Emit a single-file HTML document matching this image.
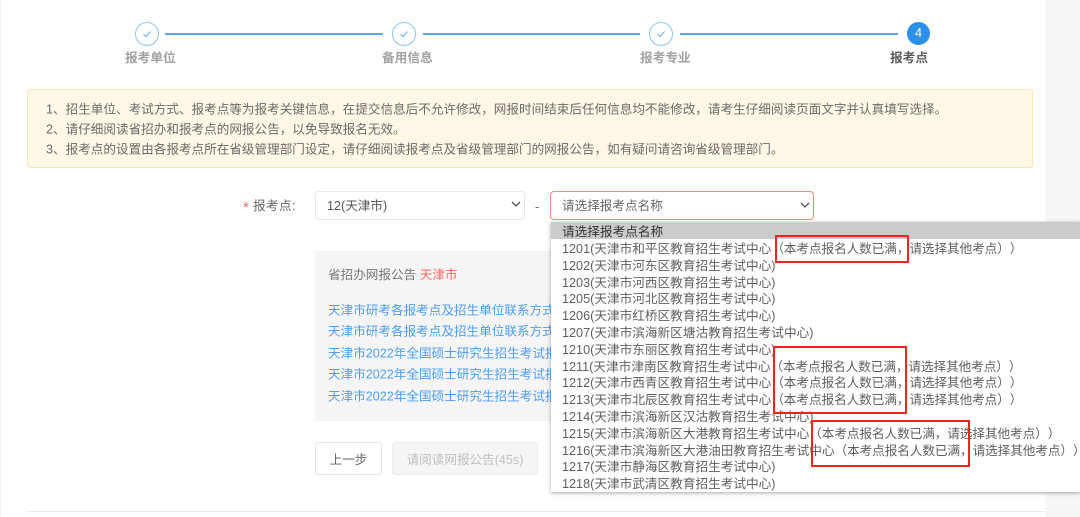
<!DOCTYPE html>
<html lang="zh"><head><meta charset="utf-8"><title>报考点</title>
<style>
html,body{margin:0;padding:0;background:#fff}
#p{position:relative;width:1080px;height:517px;overflow:hidden;background:#fff;font-family:"Liberation Sans","Noto Sans CJK SC",sans-serif;color:#606266;filter:blur(.3px)}
#p div{position:absolute;white-space:nowrap}
.c{width:24px;height:24px;box-sizing:border-box;border:1px solid #8cc5f5;border-radius:50%;top:22px;background:#fff}
.c svg{position:absolute;left:6px;top:6px}
.l{height:2px;background:#5ba8eb;top:33px}
.s{top:49px;font-size:12.7px;line-height:18px;font-weight:700;color:#a2a2a2}
.n{left:46px;font-size:12.6px;line-height:20px;color:#6a6a6a;transform:translateY(.5px)}
.k{left:328px;font-size:12.6px;line-height:22px;color:#4d9df5;width:223px;overflow:hidden;transform:translateY(.5px)}
.o{left:562px;font-size:12.65px;line-height:17px;color:#5f5f5f;text-spacing-trim:space-all;font-feature-settings:"chws" 0,"halt" 0,"palt" 0}
.o span{letter-spacing:-.09px}
.r{border:2px solid #f5211b;box-sizing:border-box}
</style></head><body><div id="p">
<div style="left:0;top:0;width:1px;height:517px;background:#f3f3f3"></div>
<div style="left:1045px;top:0;width:35px;height:517px;background:#f7f7f7"></div>

<div class="c" style="left:135px"><svg width="10" height="10" viewBox="0 0 10 10"><path d="M1.5 5.2 4 7.5 8.5 2.6" fill="none" stroke="#5a9be6" stroke-width=".9"/></svg></div>
<div class="l" style="left:165px;width:218px"></div>
<div class="c" style="left:392px"><svg width="10" height="10" viewBox="0 0 10 10"><path d="M1.5 5.2 4 7.5 8.5 2.6" fill="none" stroke="#5a9be6" stroke-width=".9"/></svg></div>
<div class="l" style="left:423px;width:217px"></div>
<div class="c" style="left:649px"><svg width="10" height="10" viewBox="0 0 10 10"><path d="M1.5 5.2 4 7.5 8.5 2.6" fill="none" stroke="#5a9be6" stroke-width=".9"/></svg></div>
<div class="l" style="left:680px;width:218px"></div>
<div style="left:907px;top:22px;width:23px;height:23px;border-radius:50%;background:#2b90e8;color:#fff;font-size:12.6px;line-height:23px;text-align:center">4</div>

<div class="s" style="left:125px">报考单位</div>
<div class="s" style="left:382px">备用信息</div>
<div class="s" style="left:640px">报考专业</div>
<div class="s" style="left:890px;color:#5c5c5c">报考点</div>

<div style="left:27px;top:89px;width:1006px;height:79px;box-sizing:border-box;background:#fff8e6;border:1px solid #fbe6b4;border-radius:3px"></div>
<div class="n" style="top:99px">1、招生单位、考试方式、报考点等为报考关键信息，在提交信息后不允许修改，网报时间结束后任何信息均不能修改，请考生仔细阅读页面文字并认真填写选择。</div>
<div class="n" style="top:119px">2、请仔细阅读省招办和报考点的网报公告，以免导致报名无效。</div>
<div class="n" style="top:139px">3、报考点的设置由各报考点所在省级管理部门设定，请仔细阅读报考点及省级管理部门的网报公告，如有疑问请咨询省级管理部门。</div>

<div style="left:243px;top:200px;font-size:15px;line-height:16px;color:#f56c6c">*</div>
<div style="left:253px;top:197px;font-size:12.6px;line-height:18px;color:#666;letter-spacing:.4px">报考点:</div>
<div style="left:315px;top:191px;width:210px;height:29px;box-sizing:border-box;border:1px solid #e4e7ed;border-radius:4px;background:#fff"></div>
<div style="left:327px;top:197px;font-size:12.6px;line-height:18px;color:#555">12(天津市)</div>
<svg style="position:absolute;left:511px;top:201px" width="10" height="7" viewBox="0 0 10 7"><path d="M1 1 5 5 9 1" fill="none" stroke="#555" stroke-width="1.3"/></svg>
<div style="left:535px;top:198px;font-size:12.6px;line-height:18px;color:#666">-</div>
<div style="left:550px;top:191px;width:264px;height:29px;box-sizing:border-box;border:1px solid #f48a78;border-radius:4px;background:#fff"></div>
<div style="left:562px;top:197px;font-size:12.6px;line-height:18px;color:#666">请选择报考点名称</div>
<svg style="position:absolute;left:800px;top:202px" width="10" height="7" viewBox="0 0 10 7"><path d="M1 1 5 5 9 1" fill="none" stroke="#555" stroke-width="1.3"/></svg>

<div style="left:315px;top:251px;width:240px;height:170px;background:#f5f5f5"></div>
<div style="left:328px;top:265px;font-size:12.6px;line-height:20px;color:#777">省招办网报公告 <span style="color:#f56c5c">天津市</span></div>
<div class="k" style="top:299px">天津市研考各报考点及招生单位联系方式</div>
<div class="k" style="top:320px">天津市研考各报考点及招生单位联系方式</div>
<div class="k" style="top:342px">天津市2022年全国硕士研究生招生考试报考</div>
<div class="k" style="top:363px">天津市2022年全国硕士研究生招生考试报考</div>
<div class="k" style="top:385px">天津市2022年全国硕士研究生招生考试报考</div>

<div style="left:315px;top:442px;width:67px;height:33px;box-sizing:border-box;border:1px solid #e6e6e6;border-radius:3px;background:#fff;font-size:12.6px;line-height:34px;text-align:center;color:#666">上一步</div>
<div style="left:392px;top:442px;width:146px;height:33px;box-sizing:border-box;border:1px solid #ebebeb;border-radius:3px;background:#f5f5f5;font-size:12.6px;line-height:34px;text-align:center;color:#c0c0c0">请阅读网报公告(45s)</div>
<div style="left:27px;top:511px;width:1018px;height:1px;background:#e8e8e8"></div>

<div style="left:551px;top:222px;width:529px;height:270px;background:#fff;box-shadow:0 1px 4px rgba(0,0,0,.35)"></div>
<div style="left:551px;top:222px;width:529px;height:17px;background:#cbcbcb"></div>
<div class="o" style="top:224px;color:#333">请选择报考点名称</div>
<div class="o" style="top:241px">1201(天津市和平区教育招生考试中心<span>（本考点报名人数已满，请选择其他考点））</span></div>
<div class="o" style="top:258px">1202(天津市河东区教育招生考试中心)</div>
<div class="o" style="top:275px">1203(天津市河西区教育招生考试中心)</div>
<div class="o" style="top:291px">1205(天津市河北区教育招生考试中心)</div>
<div class="o" style="top:308px">1206(天津市红桥区教育招生考试中心)</div>
<div class="o" style="top:325px">1207(天津市滨海新区塘沽教育招生考试中心)</div>
<div class="o" style="top:342px">1210(天津市东丽区教育招生考试中心)</div>
<div class="o" style="top:359px">1211(天津市津南区教育招生考试中心<span>（本考点报名人数已满，请选择其他考点））</span></div>
<div class="o" style="top:375px">1212(天津市西青区教育招生考试中心<span>（本考点报名人数已满，请选择其他考点））</span></div>
<div class="o" style="top:392px">1213(天津市北辰区教育招生考试中心<span>（本考点报名人数已满，请选择其他考点））</span></div>
<div class="o" style="top:409px">1214(天津市滨海新区汉沽教育招生考试中心)</div>
<div class="o" style="top:426px">1215(天津市滨海新区大港教育招生考试中心<span>（本考点报名人数已满，请选择其他考点））</span></div>
<div class="o" style="top:443px">1216(天津市滨海新区大港油田教育招生考试中心<span>（本考点报名人数已满，请选择其他考点））</span></div>
<div class="o" style="top:459px">1217(天津市静海区教育招生考试中心)</div>
<div class="o" style="top:476px">1218(天津市武清区教育招生考试中心)</div>

<div class="r" style="left:775px;top:235px;width:134px;height:28px"></div>
<div class="r" style="left:773px;top:346px;width:134px;height:68px"></div>
<div class="r" style="left:811px;top:420px;width:159px;height:47px"></div>
</div></body></html>
